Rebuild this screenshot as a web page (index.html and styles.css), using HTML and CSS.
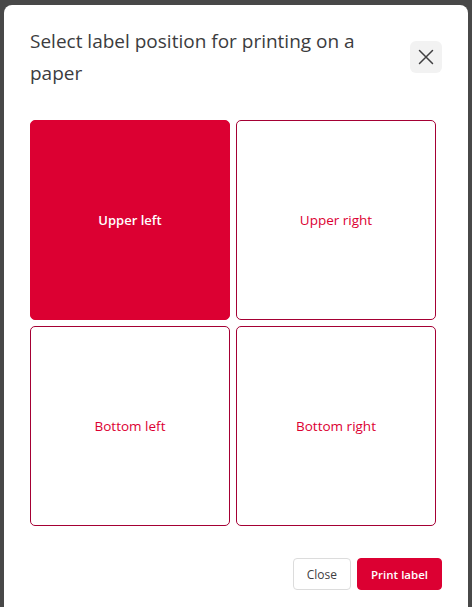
FILE: index.html
```html
<!DOCTYPE html>
<html>
<head>
<meta charset="utf-8">
<link rel="stylesheet" href="styles.css">
</head>
<body>
<div class="modal">
  <div class="header">
    <h2 class="title">Select label position for printing on a paper</h2>
    <button class="close-x" aria-label="Close">
      <svg width="16" height="16" viewBox="0 0 16 16"><path d="M1.5 1.5 L14.5 14.5 M14.5 1.5 L1.5 14.5" stroke="#414042" stroke-width="1.5" fill="none" stroke-linecap="round"/></svg>
    </button>
  </div>
  <div class="grid">
    <button class="cell selected">Upper left</button>
    <button class="cell">Upper right</button>
    <button class="cell">Bottom left</button>
    <button class="cell">Bottom right</button>
  </div>
  <div class="footer">
    <button class="btn btn-secondary">Close</button>
    <button class="btn btn-primary">Print label</button>
  </div>
</div>
</body>
</html>
```

FILE: styles.css
```css
html, body {
  margin: 0;
  padding: 0;
  height: 100%;
  overflow: hidden;
}
body {
  background: #484848;
  font-family: "Open Sans", "Liberation Sans", sans-serif;
  color: #414042;
}
.modal {
  margin: 5px 4px 0 4px;
  background: #fff;
  border-radius: 8px 8px 0 0;
  padding: 20px 26px 40px 26px;
  min-height: 640px;
  box-sizing: border-box;
}
.header {
  display: flex;
  align-items: center;
  justify-content: space-between;
  gap: 10px;
}
.title {
  margin: 0;
  font-size: 19px;
  font-weight: 400;
  line-height: 32px;
  color: #3c3c3e;
  flex: 1;
}
.close-x {
  width: 32px;
  height: 32px;
  flex: none;
  border: none;
  border-radius: 6px;
  background: #f2f2f2;
  display: flex;
  align-items: center;
  justify-content: center;
  padding: 0;
}
.grid {
  margin-top: 31px;
  display: grid;
  grid-template-columns: 200px 200px;
  grid-auto-rows: 200px;
  gap: 6px;
}
.cell {
  border: 1px solid #a50034;
  border-radius: 5px;
  background: #fff;
  color: #dc0032;
  font-family: "Open Sans", "Liberation Sans", sans-serif;
  font-size: 13.5px;
  padding: 0;
}
.cell.selected {
  background: #dc0032;
  border-color: #dc0032;
  color: #fff;
  font-weight: 600;
  font-size: 13px;
}
.footer {
  margin-top: 32px;
  display: flex;
  justify-content: flex-end;
  gap: 6px;
}
.btn {
  height: 32px;
  padding: 0 13px;
  border-radius: 4px;
  font-family: "Open Sans", "Liberation Sans", sans-serif;
  font-size: 12px;
}
.btn-secondary {
  background: #fff;
  border: 1px solid #dcdcdc;
  color: #414042;
}
.btn-primary {
  background: #dc0032;
  border: 1px solid #dc0032;
  color: #fff;
  font-weight: 600;
  font-size: 11.5px;
}
```
